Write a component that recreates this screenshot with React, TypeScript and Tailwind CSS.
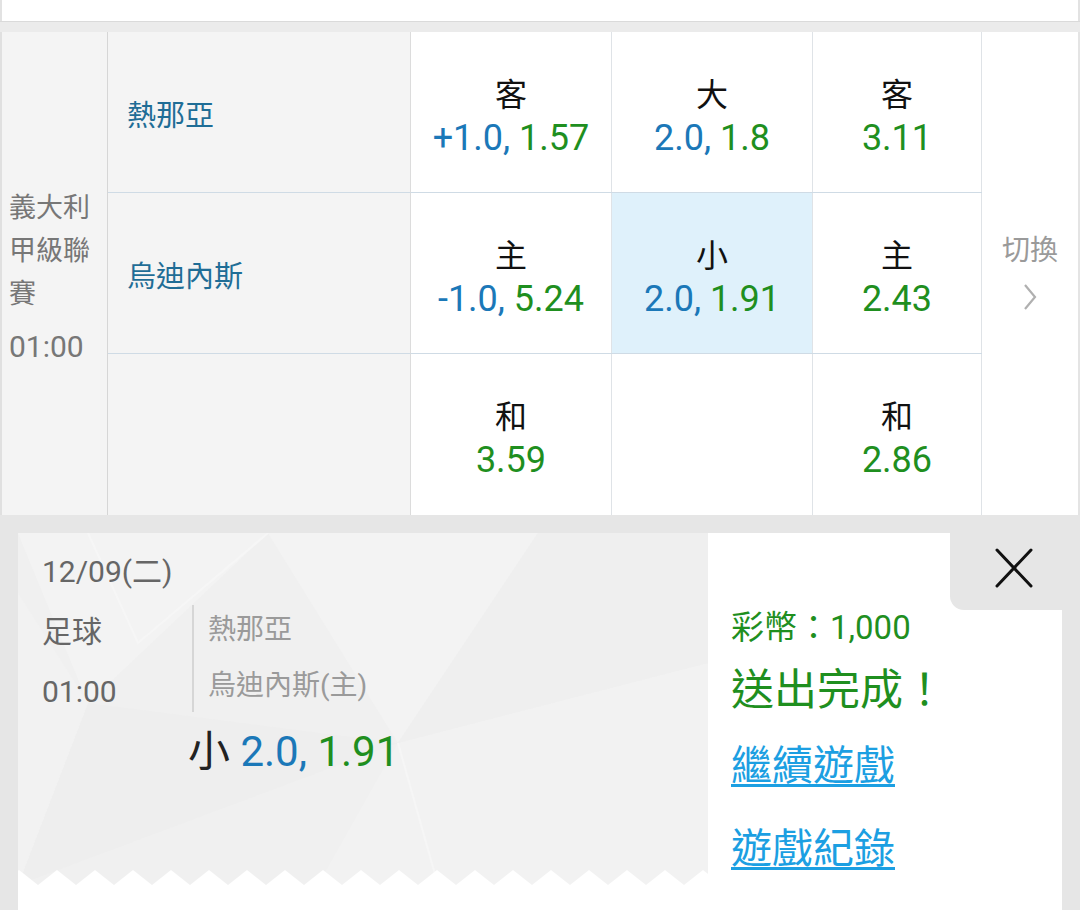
import React from "react";

const FONT = "font-['Roboto','Noto_Sans_CJK_TC',sans-serif]";

function Odds({ label, a, b, selected }: { label: string; a?: string; b: string; selected?: boolean }) {
  return (
    <div
      className={`flex flex-col items-center justify-center pt-[9px] border-r border-[#dfe3e7] ${
        selected ? "bg-[#dff1fb]" : "bg-white"
      }`}
    >
      <div className="text-[32px] leading-[43px] text-[#111]">{label}</div>
      <div className="text-[36px] leading-[43px]">
        {a ? <span className="text-[#1b78b8]">{a}, </span> : null}
        <span className="text-[#1f8f1f]">{b}</span>
      </div>
    </div>
  );
}

export default function App() {
  return (
    <div className={`w-[1080px] h-[910px] overflow-hidden bg-[#e6e6e6] ${FONT}`}>
      {/* top strip */}
      <div className="h-[21px] bg-white border-x-2 border-[#e2e2e2]" />
      <div className="h-[11px] bg-[#ebebeb] border-t border-[#dadada]" />

      {/* odds table */}
      <div className="grid grid-cols-[108px_303px_201px_201px_169px_98px] grid-rows-[161px_161px_161px] bg-white">
        <div className="row-span-3 bg-[#f4f4f4] border-l-2 border-l-[#e0e0e0] border-r border-r-[#d6d6d6] flex flex-col justify-center pl-[7px] pt-[8px] text-[27px] leading-[43px] text-[#777]">
          <div>義大利</div>
          <div>甲級聯</div>
          <div>賽</div>
          <div className="mt-[9px] text-[30px]">01:00</div>
        </div>

        {/* row 1 */}
        <div className="bg-[#f4f4f4] border-r border-r-[#dcdcdc] border-b border-b-[#cfdbe5] flex items-center pl-[19px] pt-[10px] text-[29px] text-[#1f6d96]">
          熱那亞
        </div>
        <div className="border-b border-[#cfdbe5] grid"><Odds label="客" a="+1.0" b="1.57" /></div>
        <div className="border-b border-[#cfdbe5] grid"><Odds label="大" a="2.0" b="1.8" /></div>
        <div className="border-b border-[#cfdbe5] grid"><Odds label="客" b="3.11" /></div>

        <div className="row-span-3 bg-white border-r-2 border-[#e4e4e4] flex flex-col items-center justify-center pb-[4px]">
          <div className="text-[28px] leading-[36px] text-[#9a9a9a]">切換</div>
          <svg width="16" height="28" viewBox="0 0 16 28" className="mt-[14px]">
            <polyline points="3,2 13,14 3,26" fill="none" stroke="#b0b0b0" strokeWidth="2.2" />
          </svg>
        </div>

        {/* row 2 */}
        <div className="bg-[#f4f4f4] border-r border-r-[#dcdcdc] border-b border-b-[#cfdbe5] flex items-center pl-[19px] pt-[10px] text-[29px] text-[#1f6d96]">
          烏迪內斯
        </div>
        <div className="border-b border-[#cfdbe5] grid"><Odds label="主" a="-1.0" b="5.24" /></div>
        <div className="border-b border-[#cfdbe5] grid"><Odds label="小" a="2.0" b="1.91" selected /></div>
        <div className="border-b border-[#cfdbe5] grid"><Odds label="主" b="2.43" /></div>

        {/* row 3 */}
        <div className="bg-[#f4f4f4] border-r border-r-[#dcdcdc]" />
        <div className="grid"><Odds label="和" b="3.59" /></div>
        <div className="bg-white border-r border-[#dfe3e7]" />
        <div className="grid"><Odds label="和" b="2.86" /></div>
      </div>

      {/* confirmation card */}
      <div className="px-[18px] pt-[18px]">
        <div className="flex h-[377px] bg-white">
          {/* ticket */}
          <div className="w-[690px]">
            <div className="relative h-[352px] bg-[#f0f0f0] overflow-hidden">
              <svg className="absolute inset-0" width="690" height="352" viewBox="0 0 690 352">
                <polygon points="0,0 250,0 70,170" fill="#f3f3f3" />
                <polygon points="250,0 520,0 380,210" fill="#f3f3f3" />
                <polygon points="70,170 380,210 0,352" fill="#eeeeee" />
                <polygon points="380,210 690,130 690,352 300,352" fill="#f2f2f2" />
                <polygon points="520,0 690,0 690,130 380,210" fill="#efefef" />
                <polygon points="0,60 70,170 0,352" fill="#f2f2f2" />
                <polyline points="70,0 120,110 250,0" fill="none" stroke="#f6f6f6" strokeWidth="2" />
                <polyline points="380,210 420,352" fill="none" stroke="#f6f6f6" strokeWidth="2" />
              </svg>
              <svg className="absolute bottom-0 left-0" width="690" height="15">
                <defs>
                  <pattern id="zz" width="38" height="15" patternUnits="userSpaceOnUse" x="1">
                    <path d="M-19 15 L0 0 L19 15 Z M19 15 L38 0 L57 15 Z" fill="#ffffff" />
                  </pattern>
                </defs>
                <rect width="690" height="15" fill="url(#zz)" />
              </svg>

              <div className="relative pl-[24px] pt-[21px]">
                <div className="text-[30px] leading-[36px] text-[#666]">12/09(二)</div>
                <div className="mt-[12px] flex items-start">
                  <div className="w-[150px] text-[30px] leading-[60px] text-[#666]">
                    <div>足球</div>
                    <div>01:00</div>
                  </div>
                  <div className="mt-[3px] w-[2px] h-[107px] bg-[#d6d6d6]" />
                  <div className="pl-[14px] text-[28px] leading-[56px] text-[#9a9a9a]">
                    <div>熱那亞</div>
                    <div>烏迪內斯(主)</div>
                  </div>
                </div>
                <div className="mt-[5px] ml-[146px] text-[42px] leading-[50px]">
                  <span className="text-[#222]">小 </span>
                  <span className="text-[#1b78b8]">2.0, </span>
                  <span className="text-[#1f8f1f]">1.91</span>
                </div>
              </div>
            </div>
          </div>

          {/* result panel */}
          <div className="flex-1 flex flex-col">
            <div className="flex justify-end">
              <div className="w-[112px] h-[77px] bg-[#e6e6e6] rounded-bl-[14px] flex items-center justify-center pl-[16px] pb-[8px]">
                <svg width="38" height="40" viewBox="0 0 38 40">
                  <path d="M2 2 L36 38 M36 2 L2 38" stroke="#111" strokeWidth="3" strokeLinecap="round" />
                </svg>
              </div>
            </div>
            <div className="pl-[23px]">
              <div className="text-[33px] leading-[36px] text-[#1f8f1f]">彩幣：1,000</div>
              <div className="mt-[19px] text-[43px] leading-[50px] text-[#1f8f1f]">送出完成！</div>
              <div className="mt-[27px] text-[41px] leading-[48px] text-[#1c9fe2] underline decoration-[3px] underline-offset-[4px]">
                繼續遊戲
              </div>
              <div className="mt-[35px] text-[41px] leading-[48px] text-[#1c9fe2] underline decoration-[3px] underline-offset-[4px]">
                遊戲紀錄
              </div>
            </div>
          </div>
        </div>
      </div>
    </div>
  );
}
